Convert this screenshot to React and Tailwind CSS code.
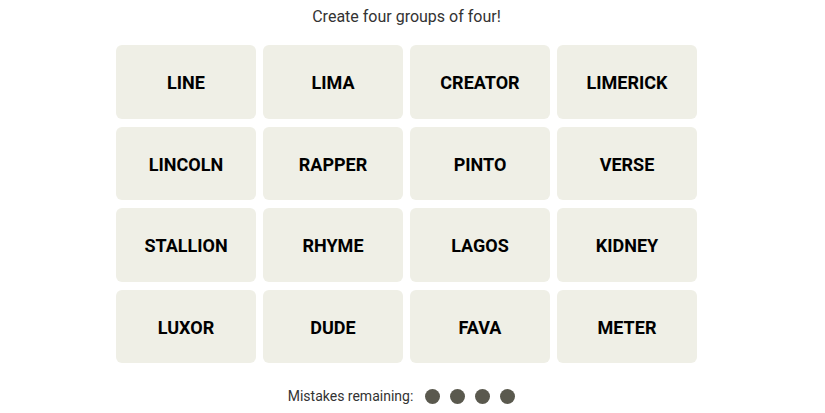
export default function App() {
  const words = [
    "LINE", "LIMA", "CREATOR", "LIMERICK",
    "LINCOLN", "RAPPER", "PINTO", "VERSE",
    "STALLION", "RHYME", "LAGOS", "KIDNEY",
    "LUXOR", "DUDE", "FAVA", "METER",
  ];
  return (
    <div className="w-[825px] h-[413px] bg-white flex flex-col items-center overflow-hidden pr-[12px]" style={{ fontFamily: "Roboto, 'Liberation Sans', sans-serif" }}>
      <p className="mt-[7px] h-[20px] text-[16px] leading-[20px] text-[#333333]">Create four groups of four!</p>
      <div className="mt-[18px] grid grid-cols-[repeat(4,139.5px)] gap-x-[7.5px] gap-y-[8px]">
        {words.map((w) => (
          <div key={w} className="h-[73.5px] pt-[2px] rounded-[6px] bg-[#efefe6] flex items-center justify-center text-[18px] font-bold text-black">
            {w}
          </div>
        ))}
      </div>
      <div className="mt-[25px] mr-[10px] flex items-center text-[14px] leading-[16px] text-[#333333]">
        <span>Mistakes remaining:</span>
        <div className="ml-[12px] flex gap-[10px]">
          <span className="w-[15px] h-[15px] rounded-full bg-[#5a594e]" />
          <span className="w-[15px] h-[15px] rounded-full bg-[#5a594e]" />
          <span className="w-[15px] h-[15px] rounded-full bg-[#5a594e]" />
          <span className="w-[15px] h-[15px] rounded-full bg-[#5a594e]" />
        </div>
      </div>
    </div>
  );
}
